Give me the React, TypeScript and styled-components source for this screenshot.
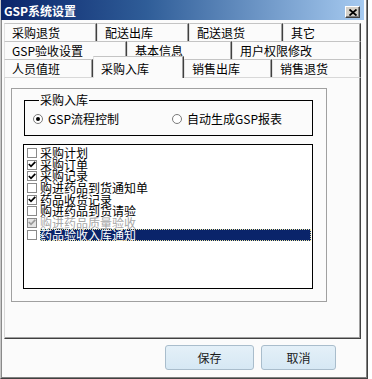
import React from "react";
import styled, { createGlobalStyle } from "styled-components";

const GlobalStyle = createGlobalStyle`
	html, body {
		margin: 0;
		padding: 0;
		background: #fff;
	}
	body {
		font-family: "Noto Sans CJK SC", "Noto Sans", sans-serif;
		font-size: 12px;
		color: #000;
	}
`;

interface TabDef {
	label: string;
	w: number;
	active?: boolean;
}

const tabRows: TabDef[][] = [
	[
		{ label: "采购退货", w: 93 },
		{ label: "配送出库", w: 92 },
		{ label: "配送退货", w: 94 },
		{ label: "其它", w: 78 },
	],
	[
		{ label: "GSP验收设置", w: 123 },
		{ label: "基本信息", w: 105 },
		{ label: "用户权限修改", w: 129 },
	],
	[
		{ label: "人员值班", w: 89 },
		{ label: "采购入库", w: 91, active: true },
		{ label: "销售出库", w: 88 },
		{ label: "销售退货", w: 89 },
	],
];

interface CheckItem {
	label: string;
	checked: boolean;
	disabled?: boolean;
	selected?: boolean;
}

const items: CheckItem[] = [
	{ label: "采购计划", checked: false },
	{ label: "采购订单", checked: true },
	{ label: "采购记录", checked: true },
	{ label: "购进药品到货通知单", checked: false },
	{ label: "药品收货记录", checked: true },
	{ label: "购进药品到货请验", checked: false },
	{ label: "购进药品质量验收", checked: true, disabled: true },
	{ label: "药品验收入库通知", checked: false, selected: true },
];

const App = () => {
	return (
		<>
			<GlobalStyle />
			<Window>
				<TitleBar>
					<Title>GSP系统设置</Title>
					<CloseButton>
						<svg width="8" height="7" viewBox="0 0 8 7">
							<path d="M0.5 0.5 L7.5 6.5 M7.5 0.5 L0.5 6.5" stroke="#000" strokeWidth="1.8" />
						</svg>
					</CloseButton>
				</TitleBar>
				<Body>
					<Tabs>
						{tabRows.map((row, i) => (
							<TabRow key={i}>
								{row.map((t) => (
									<Tab key={t.label} $w={t.w} $active={t.active}>
										{t.label}
									</Tab>
								))}
							</TabRow>
						))}
					</Tabs>
					<Panel>
						<Frame>
							<GroupBox>
								<Legend>采购入库</Legend>
								<RadioRow>
									<RadioOption $w={139}>
										<RadioCircle $on />
										GSP流程控制
									</RadioOption>
									<RadioOption>
										<RadioCircle />
										自动生成GSP报表
									</RadioOption>
								</RadioRow>
							</GroupBox>
							<CheckList>
								{items.map((it) => (
									<CheckRow key={it.label}>
										<CheckBox $disabled={it.disabled}>
											{it.checked && (
												<svg width="8" height="7" viewBox="0 0 8 7">
													<path
														d="M0.8 3 L3 5.3 L7.3 0.8"
														fill="none"
														stroke={it.disabled ? "#9a9a9a" : "#000"}
														strokeWidth="1.7"
													/>
												</svg>
											)}
										</CheckBox>
										<CheckLabel $disabled={it.disabled} $selected={it.selected}>
											{it.label}
										</CheckLabel>
									</CheckRow>
								))}
							</CheckList>
						</Frame>
					</Panel>
					<Footer>
						<Button $w={89}>保存</Button>
						<Button $w={75}>取消</Button>
					</Footer>
				</Body>
			</Window>
		</>
	);
};

const Window = styled.div`
	box-sizing: border-box;
	width: 368px;
	height: 379px;
	display: flex;
	flex-direction: column;
	background: #fbfbfb;
	border-left: 1px solid #c8c8c8;
	border-right: 1px solid #404040;
	border-bottom: 1px solid #404040;
	box-shadow: inset 1px 0 0 #8a8a8a, inset -1px 0 0 #808080, inset 0 -1px 0 #808080;
	padding-right: 3px;
`;

const TitleBar = styled.div`
	height: 20px;
	flex: none;
	display: flex;
	align-items: flex-end;
	justify-content: space-between;
	padding: 0 4px 2px 3px;
	box-sizing: border-box;
	background: linear-gradient(90deg, #0a246a 0%, #2f5d98 40%, #a6caf0 100%);
`;

const Title = styled.div`
	color: #fff;
	font-weight: bold;
	font-size: 12px;
	line-height: 14px;
	font-family: "Noto Sans CJK SC", "DejaVu Sans", sans-serif;
`;

const CloseButton = styled.div`
	box-sizing: border-box;
	width: 15px;
	height: 12px;
	display: flex;
	align-items: center;
	justify-content: center;
	background: #d4d0c8;
	border-top: 1px solid #fff;
	border-left: 1px solid #fff;
	border-right: 1px solid #404040;
	border-bottom: 1px solid #404040;
	box-shadow: inset -1px -1px 0 #808080;
`;

const Body = styled.div`
	flex: 1;
	display: flex;
	flex-direction: column;
	padding: 3px 3px 0 3px;
`;

const Tabs = styled.div`
	display: flex;
	flex-direction: column;
`;

const TabRow = styled.div`
	display: flex;
	height: 18px;
	align-items: flex-start;
`;

const Tab = styled.div<{ $w: number; $active?: boolean }>`
	box-sizing: border-box;
	position: relative;
	z-index: ${(p) => (p.$active ? 2 : 0)};
	width: ${(p) => p.$w}px;
	height: ${(p) => (p.$active ? 22 : 18)}px;
	margin-top: ${(p) => (p.$active ? -3 : 0)}px;
	padding: ${(p) => (p.$active ? 4 : 1)}px 0 0 7px;
	background: #fbfbfb;
	border-top: 1px solid #c4c4c4;
	border-left: 1px solid #e2e2e2;
	border-right: 1px solid #404040;
	box-shadow: inset -1px 0 0 #a0a0a0;
	font-size: 12px;
	line-height: 15px;
	white-space: nowrap;
`;

const Panel = styled.div`
	position: relative;
	z-index: 1;
	box-sizing: border-box;
	height: 262px;
	padding: 10px 0 0 6px;
	background: #fbfbfb;
	border-top: 1px solid #d8d8d8;
	border-left: 1px solid #d8d8d8;
	border-right: 1px solid #404040;
	border-bottom: 1px solid #404040;
	box-shadow: inset -1px -1px 0 #a0a0a0;
`;

const Frame = styled.div`
	box-sizing: border-box;
	width: 316px;
	height: 214px;
	border: 1px solid #a0a0a0;
	padding: 4px 0 0 11px;
	display: flex;
	flex-direction: column;
	align-items: flex-start;
`;

const GroupBox = styled.fieldset`
	box-sizing: border-box;
	width: 289px;
	margin: 0 0 0 1px;
	padding: 0 0 9px 8px;
	border: 1px solid #000;
	min-width: 0;
`;

const Legend = styled.legend`
	margin-left: 6px;
	padding: 0 1px;
	font-size: 12px;
	line-height: 14px;
`;

const RadioRow = styled.div`
	display: flex;
	align-items: center;
	height: 14px;
	margin-top: 5px;
`;

const RadioOption = styled.div<{ $w?: number }>`
	display: flex;
	align-items: center;
	gap: 5px;
	width: ${(p) => (p.$w ? `${p.$w}px` : "auto")};
	font-size: 12px;
	line-height: 14px;
	white-space: nowrap;
`;

const RadioCircle = styled.span<{ $on?: boolean }>`
	box-sizing: border-box;
	width: 10px;
	height: 10px;
	border-radius: 50%;
	border: 1px solid #7a7a7a;
	background: #fff;
	display: flex;
	align-items: center;
	justify-content: center;
	&::after {
		content: "";
		width: 4px;
		height: 4px;
		border-radius: 50%;
		background: ${(p) => (p.$on ? "#000" : "transparent")};
	}
`;

const CheckList = styled.div`
	box-sizing: border-box;
	width: 290px;
	height: 145px;
	margin-top: 8px;
	padding: 2px 1px 0 3px;
	background: #fff;
	border: 1px solid #000;
	display: flex;
	flex-direction: column;
`;

const CheckRow = styled.div`
	display: flex;
	align-items: center;
	height: 11.7px;
	gap: 3px;
`;

const CheckBox = styled.span<{ $disabled?: boolean }>`
	box-sizing: border-box;
	flex: none;
	width: 10px;
	height: 10px;
	border: 1px solid #8a8a8a;
	background: ${(p) => (p.$disabled ? "#e4e4e4" : "#fff")};
	display: flex;
	align-items: center;
	justify-content: center;
`;

const CheckLabel = styled.span<{ $disabled?: boolean; $selected?: boolean }>`
	flex: 1;
	height: 12px;
	font-size: 12px;
	line-height: 12px;
	white-space: nowrap;
	color: ${(p) => (p.$selected ? "#fff" : p.$disabled ? "#a8a8a8" : "#000")};
	background: ${(p) => (p.$selected ? "#0a246a" : "transparent")};
	outline: ${(p) => (p.$selected ? "1px dotted #f0e8a0" : "none")};
	outline-offset: -1px;
`;

const Footer = styled.div`
	display: flex;
	justify-content: flex-end;
	gap: 7px;
	padding: 6px 25px 0 0;
`;

const Button = styled.div<{ $w: number }>`
	box-sizing: border-box;
	width: ${(p) => p.$w}px;
	height: 25px;
	display: flex;
	align-items: center;
	justify-content: center;
	font-size: 12px;
	color: #1a1a1a;
	border: 1px solid #a9bdcc;
	border-radius: 3px;
	background: linear-gradient(180deg, #e4f0f8 0%, #d6e8f4 100%);
`;

export default App;
